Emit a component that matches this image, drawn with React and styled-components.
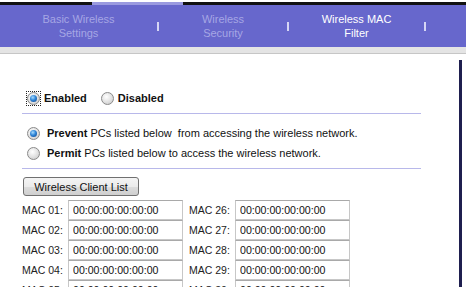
import styled, { createGlobalStyle } from "styled-components";

const GlobalStyle = createGlobalStyle`
  html, body {
    margin: 0;
    padding: 0;
    background: #fff;
    overflow: hidden;
  }
  body {
    font-family: "Liberation Sans", Arial, sans-serif;
    font-size: 11px;
    color: #111;
  }
`;

const Page = styled.div`
  width: 466px;
  height: 287px;
  overflow: hidden;
`;

const TopStrip = styled.div`
  display: flex;
  margin-top: 2px;
  height: 3px;
`;

const Segment = styled.div`
  width: ${(p) => (p.$w ? `${p.$w}px` : "auto")};
  flex: ${(p) => (p.$w ? "none" : "1")};
  background: ${(p) => p.$color};
`;

const NavBar = styled.div`
  display: flex;
  align-items: center;
  height: 42px;
  background: #6767cc;
`;

const Tab = styled.div`
  width: ${(p) => p.$w}px;
  text-align: center;
  line-height: 14px;
  font-size: 11px;
  color: ${(p) => (p.$active ? "#ffffff" : "#a6a6e4")};
`;

const Sep = styled.span`
  display: block;
  width: 2px;
  height: 9px;
  margin-top: 1px;
  background: #d6d6f4;
`;

const GreyStrip = styled.div`
  height: 6px;
  background: #e4e4e4;
  border-bottom: 1px solid #c6c6c6;
`;

const Body = styled.div`
  display: flex;
`;

const Main = styled.div`
  margin-left: 22px;
  width: 399px;
  padding-top: 34px;
`;

const RightEdge = styled.div`
  margin-left: auto;
  margin-right: 4px;
  margin-top: 6px;
  width: 3px;
  height: 300px;
  background: #1f1f4f;
`;

const Row = styled.div`
  display: flex;
  align-items: center;
  height: 20px;
  padding-left: 5px;
  margin-top: ${(p) => p.$mt ?? 0}px;
`;

const Divider = styled.div`
  height: 1px;
  background: #b8b8ea;
  margin-top: ${(p) => p.$mt}px;
`;

const Focus = styled.span`
  display: inline-flex;
  border: 1px dotted #222;
  margin-left: -1px;
`;

const Radio = styled.span`
  position: relative;
  display: inline-block;
  width: 11px;
  height: 11px;
  border-radius: 50%;
  border: 1px solid #8a8a8a;
  background: radial-gradient(circle at 40% 35%, #ffffff 0%, #e6e6e6 45%, #c4c4c4 100%);
  flex: none;
  &::after {
    content: "";
    display: ${(p) => (p.$checked ? "block" : "none")};
    position: absolute;
    left: 2px;
    top: 2px;
    width: 7px;
    height: 7px;
    border-radius: 50%;
    background: radial-gradient(circle at 40% 35%, #a8dcff 0%, #2f86d8 45%, #0d3f86 100%);
  }
`;

const Label = styled.span`
  margin-left: ${(p) => p.$ml ?? 7}px;
  margin-right: ${(p) => p.$mr ?? 0}px;
  font-size: 11px;
  color: #111;
  white-space: pre;
  b {
    font-weight: bold;
  }
`;

const Button = styled.button`
  display: block;
  margin-top: 8px;
  margin-left: 1px;
  width: 116px;
  height: 19px;
  padding: 0;
  font-family: "Liberation Sans", Arial, sans-serif;
  font-size: 11px;
  color: #111;
  border: 1px solid #707070;
  border-radius: 3px;
  background: linear-gradient(#f4f4f4 0%, #ebebeb 50%, #dcdcdc 51%, #cfcfcf 100%);
`;

const MacGrid = styled.div`
  display: grid;
  grid-template-columns: 46px 115px 52px 115px;
  margin-top: 4px;
`;

const MacLabel = styled.span`
  height: 20px;
  line-height: 20px;
  padding-left: ${(p) => (p.$second ? 6 : 0)}px;
  font-size: 10.5px;
  color: #222;
  white-space: nowrap;
`;

const MacInput = styled.input`
  box-sizing: border-box;
  width: 115px;
  height: 20px;
  margin: 0;
  padding: 0 0 0 4px;
  border: 1px solid #c7c7c7;
  border-top-color: #a9a9a9;
  font-family: "Liberation Sans", Arial, sans-serif;
  font-size: 10.6px;
  color: #111;
  background: #fff;
  outline: none;
`;

const pad = (n) => String(n).padStart(2, "0");

export default function App() {
  const rows = [1, 2, 3, 4, 5];
  return (
    <Page>
      <GlobalStyle />
      <TopStrip>
        <Segment $w={92} $color="#111" />
        <Segment $w={91} $color="#9a9ae0" />
        <Segment $color="#111" />
      </TopStrip>
      <NavBar>
        <Tab $w={157}>
          Basic Wireless
          <br />
          Settings
        </Tab>
        <Sep />
        <Tab $w={128}>
          Wireless
          <br />
          Security
        </Tab>
        <Sep />
        <Tab $w={135} $active>
          Wireless MAC
          <br />
          Filter
        </Tab>
        <Sep />
      </NavBar>
      <GreyStrip />
      <Body>
        <Main>
          <Row>
            <Focus>
              <Radio $checked />
            </Focus>
            <Label $ml={3} $mr={14}>
              <b>Enabled</b>
            </Label>
            <Radio />
            <Label $ml={4}>
              <b>Disabled</b>
            </Label>
          </Row>
          <Divider $mt={5} />
          <Row $mt={9}>
            <Radio $checked />
            <Label>
              <b>Prevent</b> PCs listed below  from accessing the wireless network.
            </Label>
          </Row>
          <Row>
            <Radio />
            <Label>
              <b>Permit</b> PCs listed below to access the wireless network.
            </Label>
          </Row>
          <Divider $mt={5} />
          <Button>Wireless Client List</Button>
          <MacGrid>
            {rows.map((r) => [
              <MacLabel key={`l${r}`}>MAC {pad(r)}:</MacLabel>,
              <MacInput key={`i${r}`} defaultValue="00:00:00:00:00:00" readOnly />,
              <MacLabel key={`l${r + 25}`} $second>
                MAC {pad(r + 25)}:
              </MacLabel>,
              <MacInput key={`i${r + 25}`} defaultValue="00:00:00:00:00:00" readOnly />,
            ])}
          </MacGrid>
        </Main>
        <RightEdge />
      </Body>
    </Page>
  );
}
